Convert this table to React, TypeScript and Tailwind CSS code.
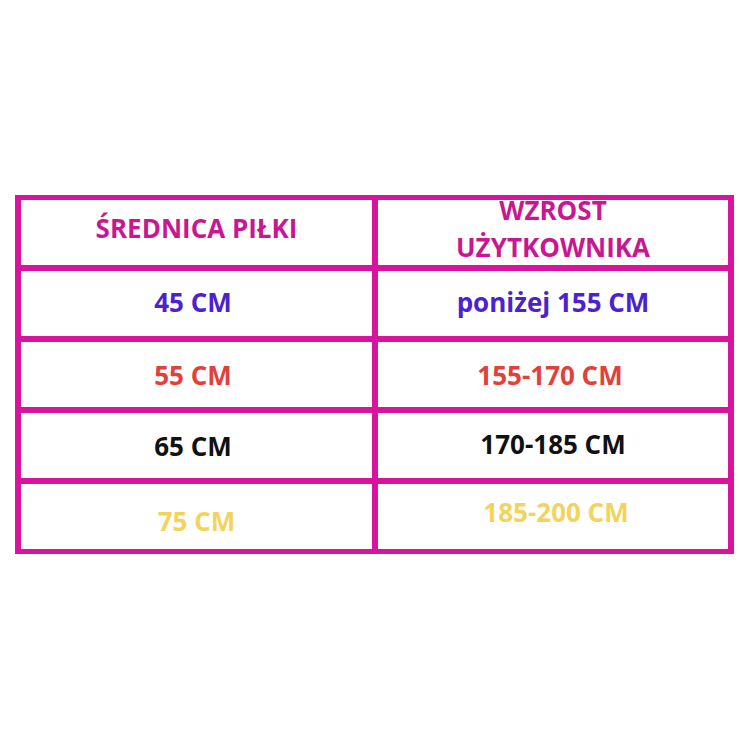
import React from "react";

const cells: { text: React.ReactNode; color: string; pad: string }[] = [
  { text: "ŚREDNICA PIŁKI", color: "text-[#c8178f]", pad: "pb-[10px]" },
  {
    text: (
      <span className="flex flex-col items-center gap-[11px]">
        <span className="block leading-[26px]">WZROST</span>
        <span className="block leading-[26px]">UŻYTKOWNIKA</span>
      </span>
    ),
    color: "text-[#c8178f]",
    pad: "pb-[8px]",
  },
  { text: "45 CM", color: "text-[#4a23cf]", pad: "pb-[4px] pr-[7px]" },
  { text: "poniżej 155 CM", color: "text-[#4a23cf]", pad: "pb-[4px]" },
  { text: "55 CM", color: "text-[#e2403b]", pad: "pr-[7px]" },
  { text: "155-170 CM", color: "text-[#e2403b]", pad: "pr-[6px]" },
  { text: "65 CM", color: "text-[#111111]", pad: "pt-[1px] pr-[7px]" },
  { text: "170-185 CM", color: "text-[#111111]", pad: "pb-[4px]" },
  { text: "75 CM", color: "text-[#f4d35c]", pad: "pt-[8px]" },
  { text: "185-200 CM", color: "text-[#f4d35c]", pad: "pb-[10px] pl-[6px]" },
];

export default function App() {
  return (
    <div
      className="w-[750px] h-[750px] bg-white pt-[195px] pl-[15px]"
      style={{ fontFamily: '"Open Sans", "Noto Sans", sans-serif' }}
    >
      <div className="w-[719px] bg-[#d8149e] px-[6px] py-[5px] grid grid-cols-[351px_350px] grid-rows-[65px_65px_65px_65px_65px] gap-x-[6px] gap-y-[6px]">
        {cells.map((c, i) => (
          <div
            key={i}
            className={`bg-white flex items-center justify-center text-center font-bold text-[26px] leading-[26px] whitespace-nowrap ${c.color} ${c.pad}`}
          >
            {c.text}
          </div>
        ))}
      </div>
    </div>
  );
}
